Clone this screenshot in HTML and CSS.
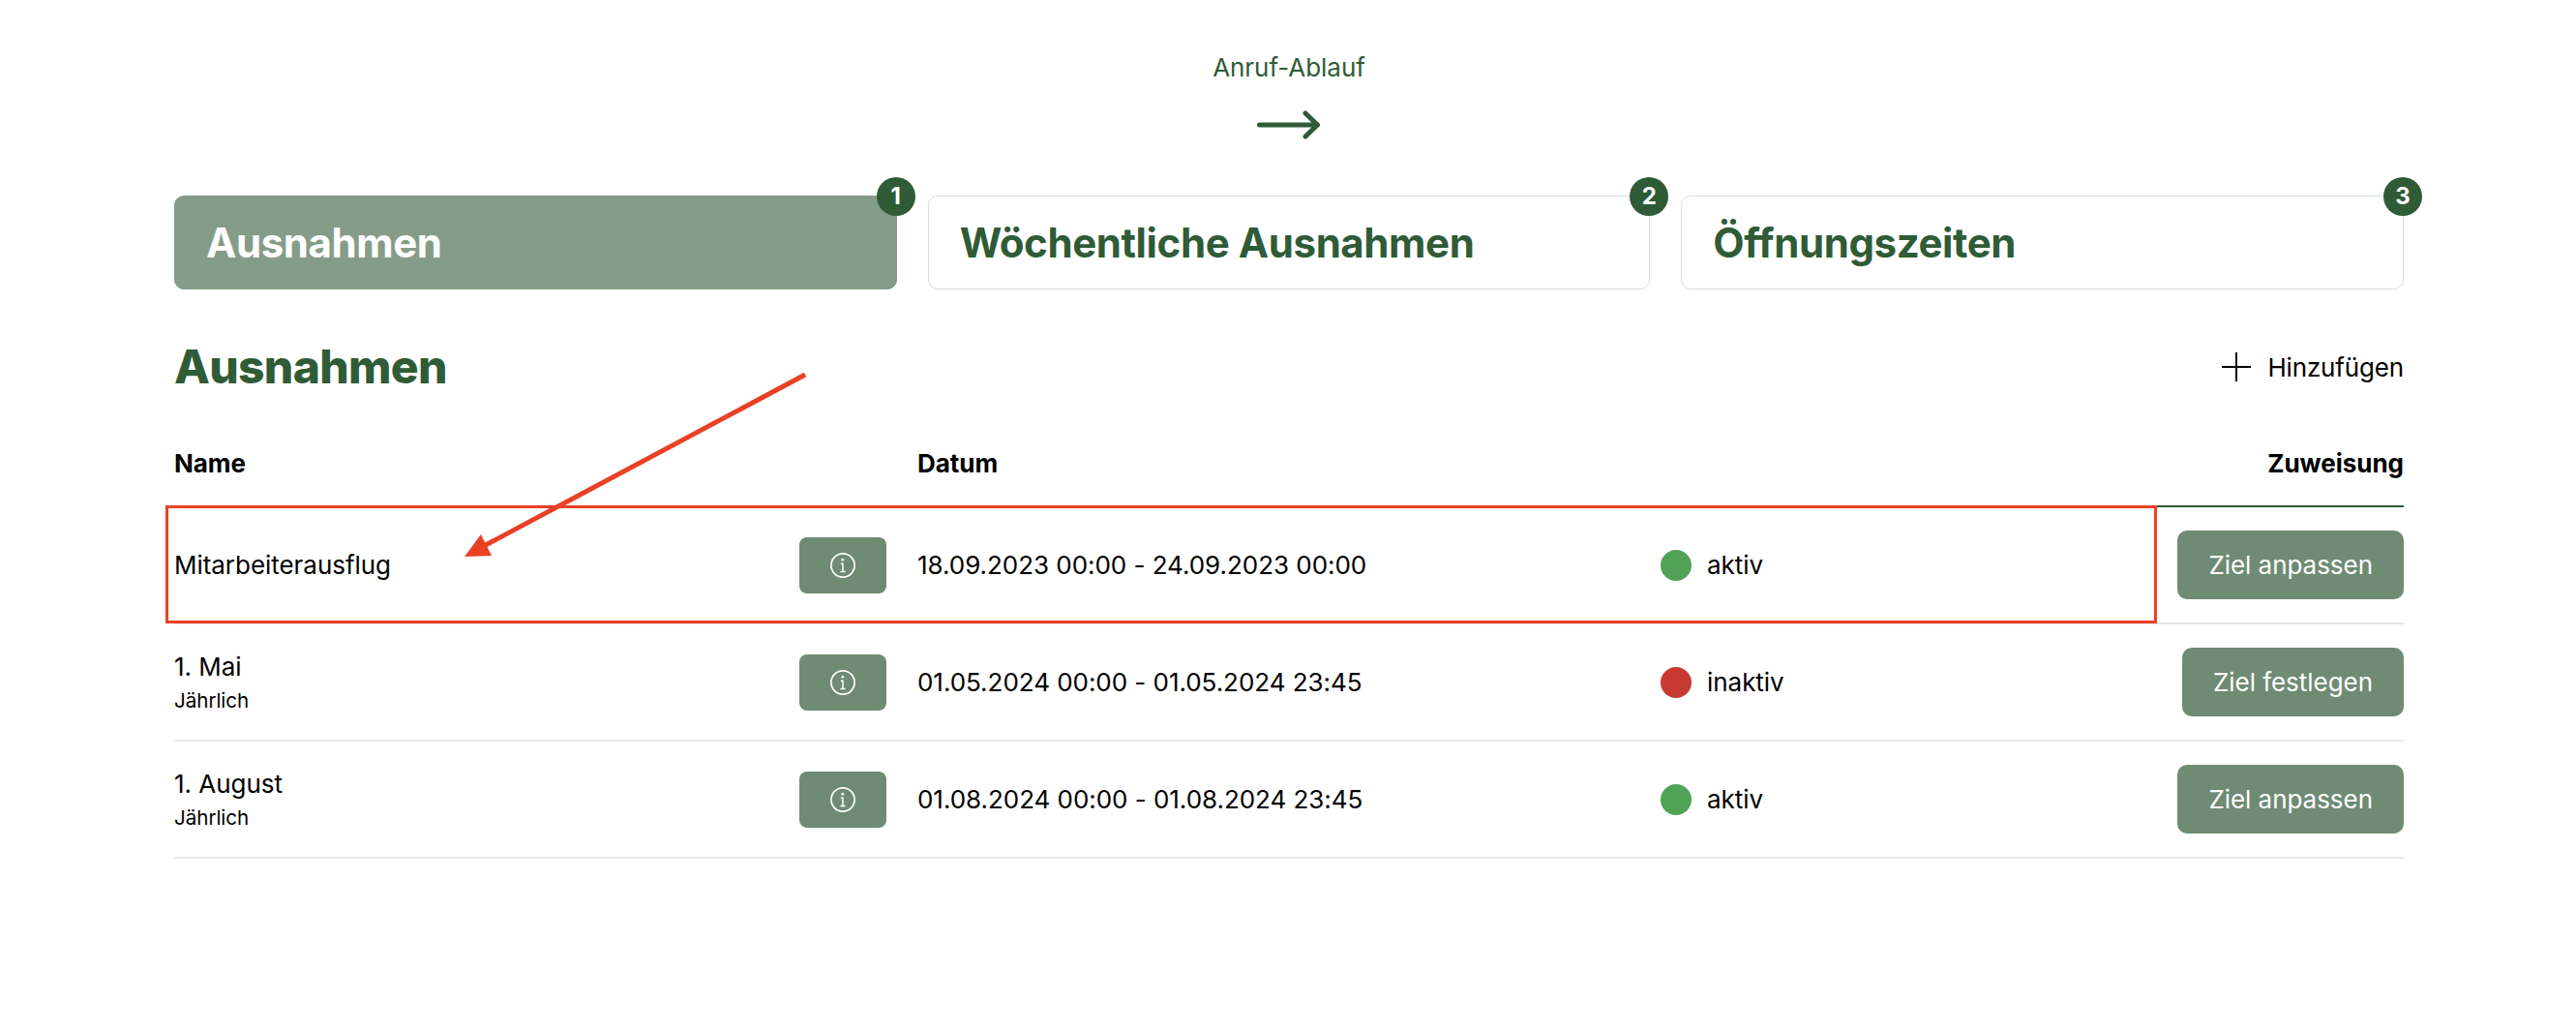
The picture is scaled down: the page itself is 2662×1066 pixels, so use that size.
FILE: index.html
```html
<!DOCTYPE html>
<html lang="de">
<head>
    <meta charset="UTF-8">
    <meta name="viewport" content="width=device-width, initial-scale=1.0">
    <title>Ausnahmen</title>
    <link rel="stylesheet" href="styles.css">
</head>
<body>
    <!-- shared info icon -->
    <svg class="sprite">
        <symbol id="icon-info" viewBox="0 0 26 26">
            <circle cx="13" cy="13" r="12.1" fill="none" stroke="currentColor" stroke-width="1.7"/>
            <circle cx="12.8" cy="7.2" r="1.4" fill="currentColor"/>
            <path d="M10.8 11.2h2.2v8.2M10.4 19.5h5.2" fill="none" stroke="currentColor" stroke-width="1.5"/>
        </symbol>
    </svg>

    <div class="container">
        <div class="flow">
            <p>Anruf-Ablauf</p>
            <svg class="flow-arrow" viewBox="0 0 66 30">
                <path d="M2.5 15h60M50 3l12.5 12L50 27" fill="none" stroke="currentColor" stroke-width="5" stroke-linecap="round" stroke-linejoin="round"/>
            </svg>
        </div>

        <div class="tabs">
            <div class="tab active">Ausnahmen<span class="badge">1</span></div>
            <div class="tab">Wöchentliche Ausnahmen<span class="badge">2</span></div>
            <div class="tab">Öffnungszeiten<span class="badge">3</span></div>
        </div>

        <div class="title">
            <h1>Ausnahmen</h1>
            <button class="add">
                <svg viewBox="0 0 30 30"><path d="M15 0v30M0 15h30" stroke="currentColor" stroke-width="2"/></svg>
                Hinzufügen
            </button>
        </div>

        <div class="list">
            <div class="row head">
                <div>Name</div>
                <div>Datum</div>
                <div class="right">Zuweisung</div>
            </div>
            <div class="row">
                <div class="name">
                    <div>Mitarbeiterausflug</div>
                    <button class="info"><svg><use href="#icon-info"/></svg></button>
                </div>
                <div>18.09.2023 00:00 - 24.09.2023 00:00</div>
                <div class="target">
                    <span class="status"><i class="dot on"></i>aktiv</span>
                    <button class="btn">Ziel anpassen</button>
                </div>
                <div class="highlight"></div>
                <svg class="pointer" viewBox="0 0 356 192">
                    <path d="M352 3L20 180" fill="none" stroke="currentColor" stroke-width="5"/>
                    <path d="M0 191l17-23 11 22z" fill="currentColor"/>
                </svg>
            </div>
            <div class="row">
                <div class="name">
                    <div>1. Mai<small>Jährlich</small></div>
                    <button class="info"><svg><use href="#icon-info"/></svg></button>
                </div>
                <div>01.05.2024 00:00 - 01.05.2024 23:45</div>
                <div class="target">
                    <span class="status"><i class="dot off"></i>inaktiv</span>
                    <button class="btn">Ziel festlegen</button>
                </div>
            </div>
            <div class="row">
                <div class="name">
                    <div>1. August<small>Jährlich</small></div>
                    <button class="info"><svg><use href="#icon-info"/></svg></button>
                </div>
                <div>01.08.2024 00:00 - 01.08.2024 23:45</div>
                <div class="target">
                    <span class="status"><i class="dot on"></i>aktiv</span>
                    <button class="btn">Ziel anpassen</button>
                </div>
            </div>
        </div>
    </div>
</body>
</html>
```
FILE: styles.css
```css
* {
    box-sizing: border-box;
}
body {
    margin: 0;
    background: #fff;
    color: #000;
    font-family: Inter, sans-serif;
    font-size: 26px;
    font-optical-sizing: none;
    letter-spacing: -0.04px;
    line-height: 39px;
}
button {
    font: inherit;
    letter-spacing: inherit;
    border: none;
    cursor: pointer;
}
svg {
    display: block;
}
.sprite {
    display: none;
}
.container {
    width: 2304px;
    margin: 0 auto 0 180px;
    padding-top: 50px;
}
.flow {
    display: flex;
    flex-direction: column;
    align-items: center;
    color: #2f5b37;
}
.flow p {
    margin: 0 0 25px;
}
.flow-arrow {
    width: 66px;
    height: 30px;
}
.tabs {
    display: grid;
    grid-template-columns: repeat(3, 1fr);
    gap: 32px;
    margin-top: 58px;
}
.tab {
    position: relative;
    height: 97px;
    padding: 0 32px;
    border: 1px solid #d5dfd8;
    border-radius: 10px;
    color: #2f5b37;
    font-size: 42px;
    font-weight: 700;
    letter-spacing: -0.4px;
    line-height: 95px;
}
.tab.active {
    background: #859c88;
    border-color: #859c88;
    color: #fff;
}
.badge {
    position: absolute;
    top: -20px;
    right: -20px;
    width: 40px;
    height: 40px;
    border-radius: 50%;
    background: #2f5b37;
    color: #fff;
    font-size: 24px;
    letter-spacing: 0;
    line-height: 40px;
    text-align: center;
}
.title {
    display: flex;
    justify-content: space-between;
    align-items: center;
    height: 72px;
    margin-top: 44px;
}
h1 {
    margin: 0;
    color: #2f5b37;
    font-size: 48px;
    font-weight: 800;
    letter-spacing: -0.7px;
    line-height: 72px;
}
.add {
    display: flex;
    align-items: center;
    gap: 17px;
    padding: 0;
    background: none;
    color: #000;
    letter-spacing: -0.16px;
}
.add svg {
    width: 30px;
    height: 30px;
}
.list {
    margin-top: 20px;
}
.row {
    position: relative;
    display: grid;
    grid-template-columns: repeat(3, 1fr);
    align-items: center;
    height: 121px;
    border-bottom: 2px solid #e5e7eb;
}
.row.head {
    height: 89px;
    border-bottom-color: #2f5b37;
    font-weight: 700;
}
.right {
    text-align: right;
}
.name {
    display: flex;
    justify-content: space-between;
    align-items: center;
    padding-right: 32px;
}
.name small {
    display: block;
    margin-bottom: 2px;
    font-size: 20.6px;
    line-height: 31px;
}
.info {
    width: 90px;
    height: 58px;
    padding: 16px 32px;
    border-radius: 8px;
    background: #6f8b74;
    color: #fff;
}
.info svg {
    width: 26px;
    height: 26px;
}
.target {
    display: flex;
    justify-content: space-between;
    align-items: center;
}
.status {
    display: flex;
    align-items: center;
    gap: 16px;
}
.dot {
    width: 32px;
    height: 32px;
    border-radius: 50%;
}
.dot.on {
    background: #4fa256;
}
.dot.off {
    background: #c73a31;
}
.btn {
    height: 71px;
    padding: 0 32px;
    border-radius: 10px;
    background: #6f8b74;
    color: #fff;
}

/* annotation on top of the first row */
.highlight {
    position: absolute;
    top: -2px;
    left: -9px;
    width: 2058px;
    height: 122px;
    border: 3px solid #ea4025;
}
.pointer {
    position: absolute;
    top: -140px;
    left: 300px;
    width: 356px;
    height: 192px;
    color: #ea4025;
}
```
